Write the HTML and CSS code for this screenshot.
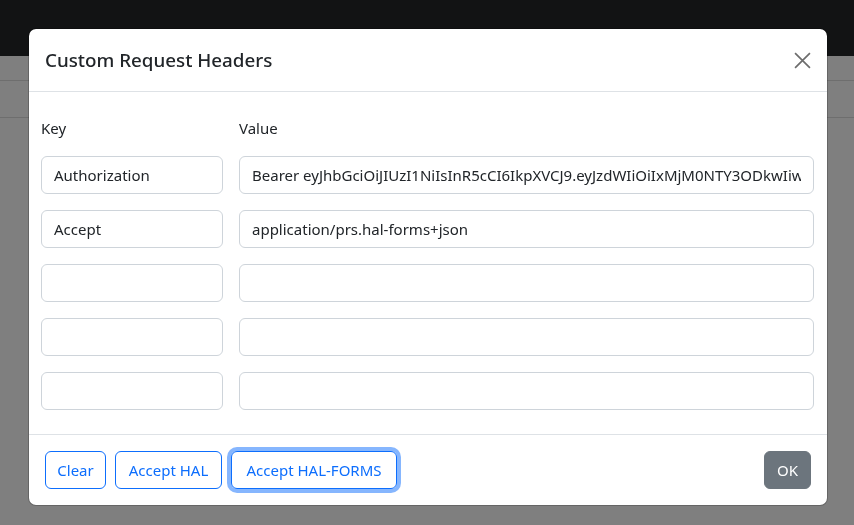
FILE: index.html
```html
<!DOCTYPE html>
<html lang="en">
<head>
<meta charset="utf-8">
<title>Custom Request Headers</title>
<link rel="stylesheet" href="styles.css">
</head>
<body>
<div class="page">
  <nav class="navbar"></nav>
  <div class="page-content">
    <div class="page-row"></div>
    <div class="page-row"></div>
  </div>
</div>
<div class="backdrop"></div>
<div class="modal">
  <div class="modal-header">
    <h5 class="modal-title">Custom Request Headers</h5>
    <button class="btn-close" aria-label="Close">
      <svg viewBox="0 0 16 16" width="17" height="17"><path d="M1 1 L15 15 M15 1 L1 15" stroke="currentColor" stroke-width="1.6" fill="none"/></svg>
    </button>
  </div>
  <div class="modal-body">
    <div class="grid">
      <label class="col-label">Key</label>
      <label class="col-label">Value</label>
      <input class="form-control" value="Authorization">
      <input class="form-control" value="Bearer eyJhbGciOiJIUzI1NiIsInR5cCI6IkpXVCJ9.eyJzdWIiOiIxMjM0NTY3ODkwIiwibmFtZSI6IkpvaG4gRG9lIiwiaWF0IjoxNTE2MjM5MDIyfQ">
      <input class="form-control" value="Accept">
      <input class="form-control" value="application/prs.hal-forms+json">
      <input class="form-control" value="">
      <input class="form-control" value="">
      <input class="form-control" value="">
      <input class="form-control" value="">
      <input class="form-control" value="">
      <input class="form-control" value="">
    </div>
  </div>
  <div class="modal-footer">
    <div class="btn-group-left">
      <button class="btn btn-outline btn-clear">Clear</button>
      <button class="btn btn-outline btn-hal">Accept HAL</button>
      <button class="btn btn-outline btn-forms btn-focus">Accept HAL-FORMS</button>
    </div>
    <button class="btn btn-secondary">OK</button>
  </div>
</div>
</body>
</html>
```
FILE: styles.css
```css
* { box-sizing: border-box; }
html, body { margin: 0; padding: 0; }
body {
  font-family: "Noto Sans", "Open Sans", sans-serif;
  font-size: 15px;
  line-height: 24px;
  color: #212529;
  background: #ffffff;
  width: 854px;
  height: 525px;
  overflow: hidden;
}
.navbar { height: 56px; background: #242629; }
.page-content { padding-top: 24px; }
.page-row { height: 37px; border-top: 1px solid #dcdcdc; }
.backdrop {
  position: fixed;
  inset: 0;
  background: rgba(0, 0, 0, 0.5);
}
.modal {
  position: absolute;
  top: 28px;
  left: 28px;
  width: 800px;
  background: #fff;
  border: 1px solid rgba(0, 0, 0, 0.2);
  border-radius: 8px;
  background-clip: padding-box;
}
.modal-header {
  display: flex;
  align-items: center;
  justify-content: space-between;
  padding: 16px;
  border-bottom: 1px solid #dee2e6;
}
.modal-title {
  margin: 0;
  font-size: 18.8px;
  font-weight: 500;
  line-height: 30px;
}
.btn-close {
  border: 0;
  background: none;
  padding: 0;
  width: 17px;
  height: 17px;
  color: #6d6d6d;
  display: flex;
}
.modal-body { padding: 24px 13px 24px 12px; }
.grid {
  display: grid;
  grid-template-columns: 182px 1fr;
  column-gap: 16px;
  row-gap: 16px;
}
.col-label { display: block; line-height: 24px; }
.form-control {
  display: block;
  width: 100%;
  height: 38px;
  padding: 6px 12px;
  font-family: inherit;
  font-size: 15px;
  line-height: 24px;
  color: #212529;
  background: #fff;
  border: 1px solid #ced4da;
  border-radius: 6px;
  outline: none;
}
.modal-footer {
  display: flex;
  align-items: center;
  justify-content: space-between;
  padding: 12px;
  border-top: 1px solid #dee2e6;
}
.btn-group-left { display: flex; }
.btn {
  font-family: inherit;
  font-size: 15px;
  line-height: 24px;
  padding: 6px 12px;
  margin: 4px;
  border-radius: 6px;
  border: 1px solid transparent;
  background: transparent;
  height: 38px;
}
.btn-clear { width: 61px; padding: 6px 0; }
.btn-hal { width: 107px; padding: 6px 0; margin-left: 5px; }
.btn-forms { width: 166px; padding: 6px 0; margin-left: 5px; }
.btn-outline { color: #0d6efd; border-color: #0d6efd; }
.btn-focus { box-shadow: 0 0 0 4px rgba(13, 110, 253, 0.5); }
.btn-secondary { color: #fff; background: #6c757d; border-color: #6c757d; width: 47px; padding: 6px 0; }
```
